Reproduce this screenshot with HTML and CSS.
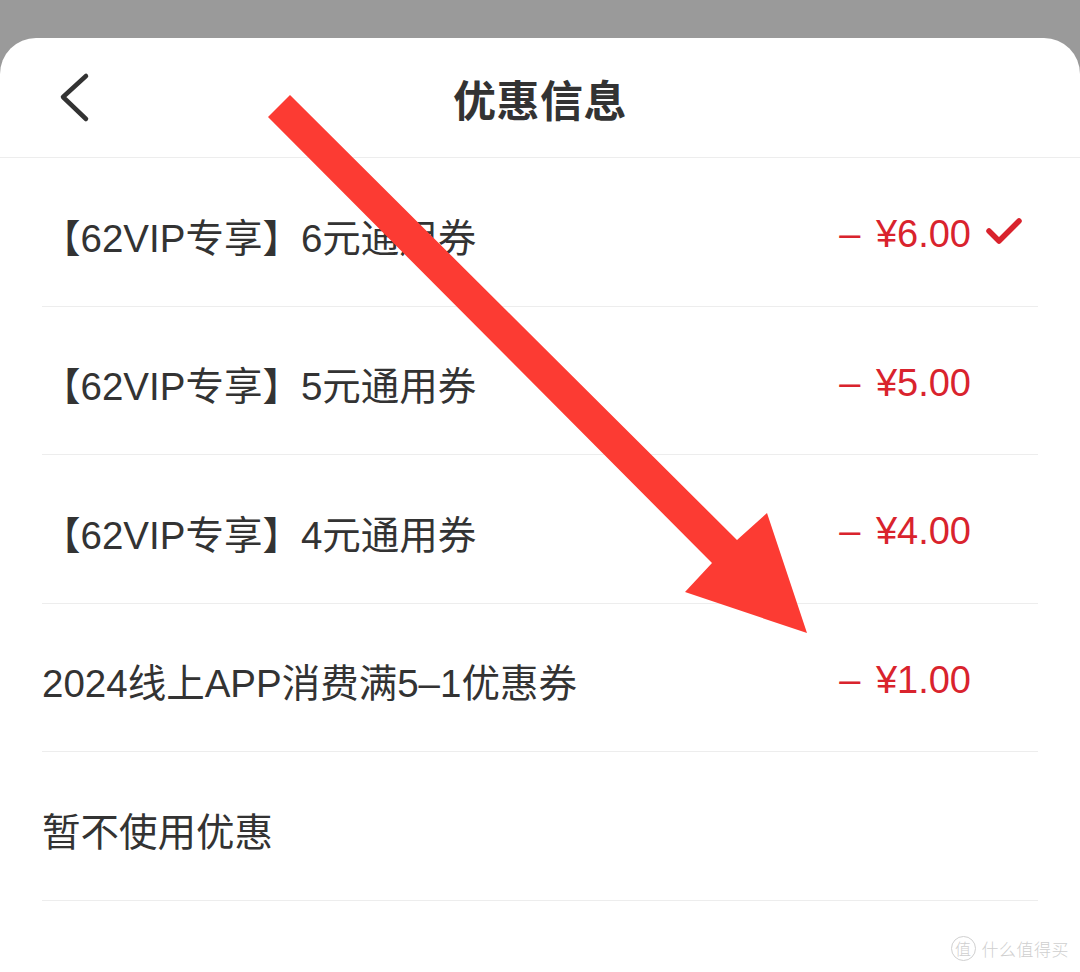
FILE: index.html
```html
<!DOCTYPE html>
<html lang="zh-CN">
<head>
<meta charset="utf-8">
<title>优惠信息</title>
<link rel="stylesheet" href="styles.css">
</head>
<body>
<div class="sheet">
  <header class="sheet-header">
    <button class="back" aria-label="返回">
      <svg width="32" height="52" viewBox="0 0 32 52"><path d="M28 4 L5 25 L28 47" fill="none" stroke="#333" stroke-width="4.5" stroke-linecap="round" stroke-linejoin="round"/></svg>
    </button>
    <h1 class="title">优惠信息</h1>
    <span class="spacer"></span>
  </header>
  <ul class="coupons">
    <li class="coupon">
      <span class="name">【62VIP专享】6元通用券</span>
      <span class="right"><span class="price">– ¥6.00</span><span class="check-slot"><svg width="38" height="30" viewBox="0 0 38 30"><path d="M4 13 L14 23 L34 3" fill="none" stroke="#d9232d" stroke-width="5.5" stroke-linecap="round" stroke-linejoin="round"/></svg></span></span>
    </li>
    <li class="coupon">
      <span class="name">【62VIP专享】5元通用券</span>
      <span class="right"><span class="price">– ¥5.00</span><span class="check-slot"></span></span>
    </li>
    <li class="coupon">
      <span class="name">【62VIP专享】4元通用券</span>
      <span class="right"><span class="price">– ¥4.00</span><span class="check-slot"></span></span>
    </li>
    <li class="coupon">
      <span class="name">2024线上APP消费满5–1优惠券</span>
      <span class="right"><span class="price">– ¥1.00</span><span class="check-slot"></span></span>
    </li>
    <li class="coupon">
      <span class="name">暂不使用优惠</span>
    </li>
  </ul>
</div>

<svg class="pointer" width="1080" height="972" viewBox="0 0 1080 972" aria-hidden="true">
  <polygon points="268,117 290,95 737,540 767,513 807,633 685,592 712,563" fill="#fc3b33"/>
</svg>

<div class="watermark"><span class="badge">值</span><span class="mark-text">什么值得买</span></div>
</body>
</html>
```

FILE: styles.css
```css
html, body {
  margin: 0;
  padding: 0;
}

body {
  background: #9a9a9a;
  font-family: "Liberation Sans", "Noto Sans CJK SC", sans-serif;
  color: #333;
  width: 1080px;
  height: 972px;
  overflow: hidden;
  position: relative;
}

.sheet {
  margin-top: 38px;
  height: 934px;
  background: #fff;
  border-radius: 36px 36px 0 0;
}

.sheet-header {
  height: 119px;
  border-bottom: 1px solid #ededed;
  display: grid;
  grid-template-columns: 1fr auto 1fr;
  align-items: center;
}

.back {
  justify-self: start;
  margin-left: 58px;
  padding: 0;
  border: 0;
  background: none;
  display: flex;
}

.title {
  margin: 0;
  font-family: "Noto Sans CJK SC", sans-serif;
  font-size: 43px;
  font-weight: 600;
  color: #333;
  letter-spacing: 0.5px;
}

.coupons {
  list-style: none;
  margin: 0;
  padding: 0 42px;
}

.coupon {
  box-sizing: border-box;
  height: 148.5px;
  padding-top: 6px;
  border-bottom: 1px solid #ededed;
  display: flex;
  align-items: center;
  justify-content: space-between;
  font-size: 38.5px;
}

.name {
  color: #333;
}

.right {
  display: flex;
  align-items: center;
}

.price {
  color: #d9232d;
  font-size: 38px;
  word-spacing: 5px;
}

.check-slot {
  width: 67px;
  display: flex;
  align-items: center;
  padding-left: 14px;
  box-sizing: border-box;
  margin-top: -4px;
}

.pointer {
  position: absolute;
  left: 0;
  top: 0;
  pointer-events: none;
}

.watermark {
  position: absolute;
  right: 11px;
  bottom: 11px;
  display: flex;
  align-items: center;
  gap: 6px;
  color: #cfcfcf;
  font-family: "Noto Sans CJK SC", sans-serif;
  font-weight: 300;
}

.badge {
  width: 23px;
  height: 23px;
  border: 1.5px solid #d0d0d0;
  border-radius: 50%;
  font-size: 16px;
  line-height: 23px;
  text-align: center;
}

.mark-text {
  font-size: 17px;
  letter-spacing: 0.5px;
}
```
